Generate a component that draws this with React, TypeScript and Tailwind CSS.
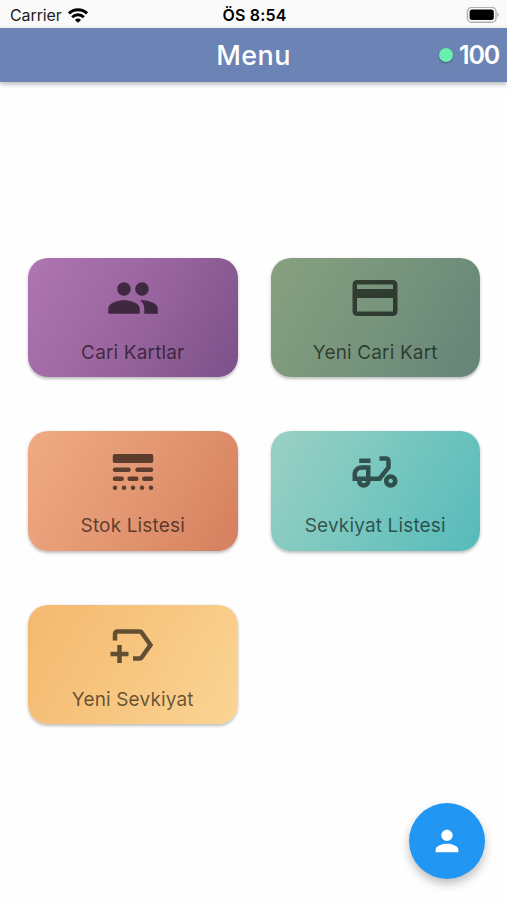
import type { ReactNode } from "react"
import {
  MdCreditCard,
  MdOutlineDeliveryDining,
  MdOutlineNewLabel,
  MdPeople,
  MdPerson,
} from "react-icons/md"

const iconClass = "h-[54px] w-[54px] text-black/60"

function LineStyleIcon() {
  return (
    <svg viewBox="0 0 24 24" fill="currentColor" className={iconClass}>
      <rect x="3" y="4" width="18" height="4" rx="0.9" />
      <rect x="3" y="10" width="8" height="2" rx="1" />
      <rect x="13" y="10" width="8" height="2" rx="1" />
      <rect x="3" y="14" width="5" height="2" rx="1" />
      <rect x="9.5" y="14" width="5" height="2" rx="1" />
      <rect x="16" y="14" width="5" height="2" rx="1" />
      {[4, 8, 12, 16, 20].map((x) => (
        <circle key={x} cx={x} cy="19" r="1" />
      ))}
    </svg>
  )
}

const menuItems = [
  {
    title: "Cari Kartlar",
    gradient: "from-[#ae76b2] via-[#9a659e] to-[#7c5089]",
    icon: <MdPeople className={iconClass} />,
  },
  {
    title: "Yeni Cari Kart",
    gradient: "from-[#87a17f] via-[#77947c] to-[#658478]",
    icon: <MdCreditCard className={iconClass} />,
  },
  {
    title: "Stok Listesi",
    gradient: "from-[#f0ab84] via-[#e39772] to-[#d57f5f]",
    icon: <LineStyleIcon />,
  },
  {
    title: "Sevkiyat Listesi",
    gradient: "from-[#9bd0c4] via-[#77c7bf] to-[#55babb]",
    icon: <MdOutlineDeliveryDining className={iconClass} />,
  },
  {
    title: "Yeni Sevkiyat",
    gradient: "from-[#f4b870] via-[#f7c680] to-[#fbd594]",
    icon: <MdOutlineNewLabel className={iconClass} />,
  },
]

function MenuCard({ title, gradient, icon }: { title: string; gradient: string; icon: ReactNode }) {
  return (
    <button
      className={`flex h-[119.5px] flex-col items-center rounded-[20px] bg-linear-120 pt-[13.7px] shadow-[0_1.5px_3px_rgba(0,0,0,0.25)] ${gradient}`}
    >
      {icon}
      <span className="mt-[13.3px] text-[19px] leading-7 tracking-[0.15px] whitespace-nowrap text-black/60">{title}</span>
    </button>
  )
}

function StatusBar() {
  return (
    <div className="grid h-7 grid-cols-3 items-center bg-[#fafafa] pt-0.5 pr-[8px] pl-[10px] text-[16px] text-[#222]">
      <div className="flex items-center gap-[6px]">
        <span className="tracking-[-0.1px]">Carrier</span>
        <svg viewBox="0 0 20 15" className="h-[15px] w-5" fill="none" stroke="#000" strokeWidth="3">
          <path d="M1 5.4a12.8 12.8 0 0 1 18 0" />
          <path d="M4.2 9.2a8.3 8.3 0 0 1 11.6 0" />
          <path d="M10 14.8 6.9 11.9a4.4 4.4 0 0 1 6.2 0z" fill="#000" stroke="none" />
        </svg>
      </div>
      <span className="text-center font-semibold tracking-[0.2px] whitespace-nowrap text-black">ÖS 8:54</span>
      <svg viewBox="0 0 33 17" className="h-[17px] w-[33px] justify-self-end">
        <rect x="1.4" y="0.4" width="28.6" height="14.8" rx="4.3" fill="none" stroke="#b0b0b0" strokeWidth="1.4" />
        <rect x="3.6" y="2.5" width="24.2" height="10.6" rx="2.5" fill="#000" />
        <path d="M31.4 5.5V10c1.8-.7 1.8-3.8 0-4.5z" fill="#aaa" />
      </svg>
    </div>
  )
}

export default function App() {
  return (
    <div className="relative flex h-[900px] w-[507px] flex-col overflow-hidden bg-[#fefefe] font-['Inter',sans-serif]">
      <StatusBar />
      <header className="grid h-[54px] grid-cols-3 items-center bg-[#6c84b5] px-[8px] text-white shadow-[0_2px_5px_rgba(0,0,0,0.3)]">
        <h1 className="col-start-2 text-center text-[27px] leading-none font-medium tracking-[0.4px]">Menu</h1>
        <div className="flex items-center justify-end gap-[6px]">
          <span className="h-[14px] w-[14px] rounded-full bg-[#69f0ae] shadow-[0_1px_2px_rgba(0,0,0,0.35)]" />
          <span className="text-[25px] leading-none font-semibold tracking-[-1.2px]">100</span>
        </div>
      </header>

      <main className="grid grid-cols-2 gap-x-[33px] gap-y-[54px] pt-[175.7px] pr-[27px] pl-[28px]">
        {menuItems.map((item) => (
          <MenuCard key={item.title} {...item} />
        ))}
      </main>

      <button className="absolute right-[22px] bottom-[21.5px] flex h-[76px] w-[76px] items-center justify-center rounded-full bg-[#2196f3] text-white shadow-[0_5px_10px_rgba(0,0,0,0.25)]">
        <MdPerson className="h-[34px] w-[34px]" />
      </button>
    </div>
  )
}
